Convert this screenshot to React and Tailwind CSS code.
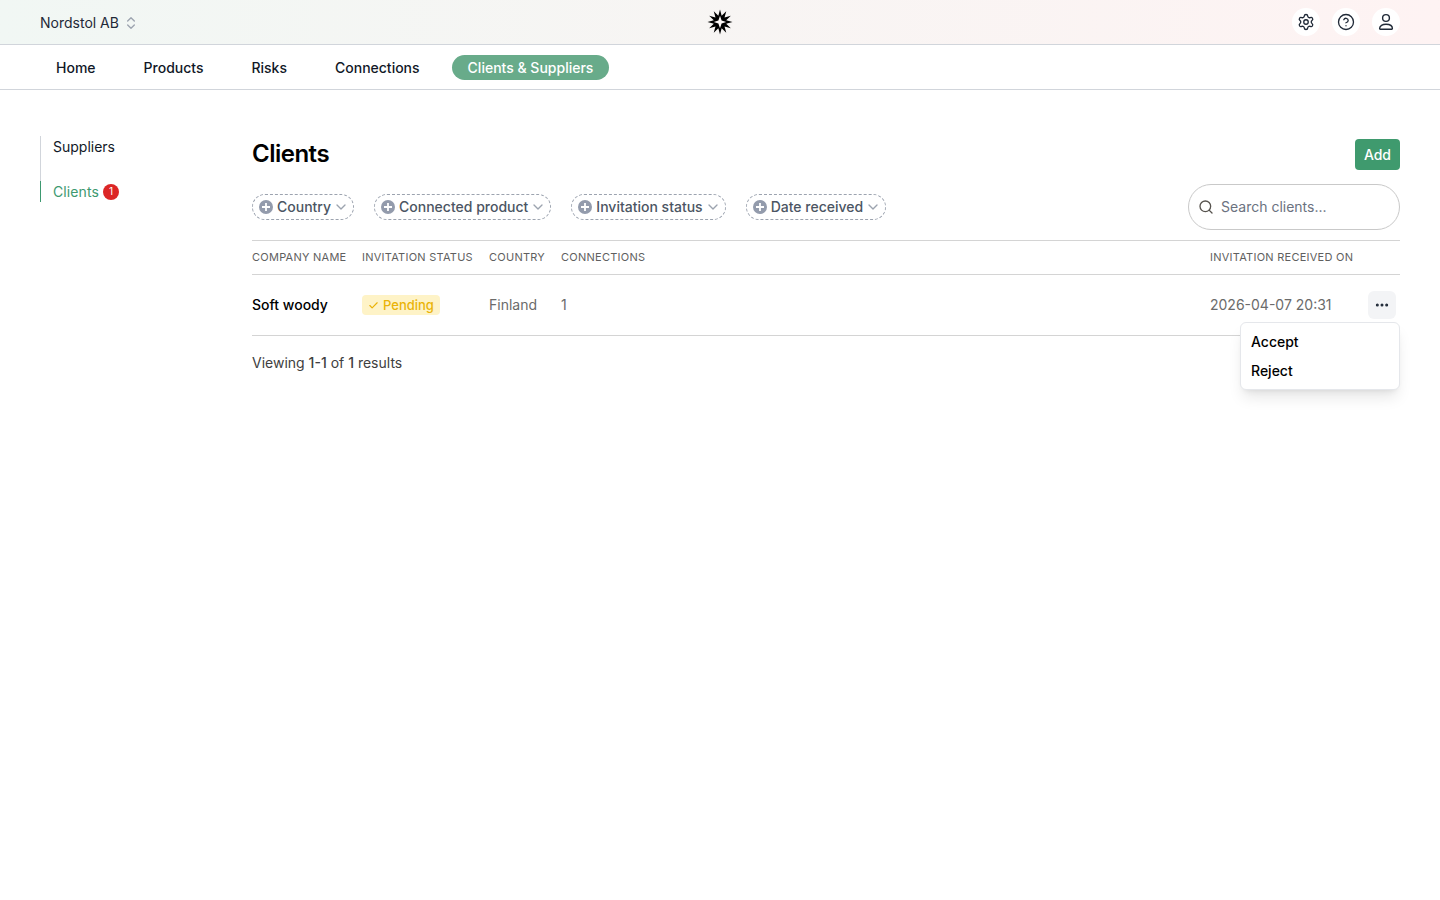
import React from 'react';
import { ChevronDown, ChevronsUpDown, Check, CircleHelp, Ellipsis, Search, Settings } from 'lucide-react';

const tabs = ['Home', 'Products', 'Risks', 'Connections'];
const filters = [
  { label: 'Country', margin: 'mr-5' },
  { label: 'Connected product', margin: 'mr-5' },
  { label: 'Invitation status', margin: 'mr-5' },
  { label: 'Date received', margin: '' },
];

// spiky outer ring for the logo, peaks every 30deg
const logoPoints = Array.from({ length: 24 }, (_, i) => {
  const r = i % 2 === 0 ? 12.5 : 6.4;
  const a = (i * 15 * Math.PI) / 180;
  return `${(13 + r * Math.sin(a)).toFixed(2)},${(13 - r * Math.cos(a)).toFixed(2)}`;
}).join(' ');

const Logo = () => (
  <svg width="26" height="26" viewBox="0 0 26 26">
    <polygon points={logoPoints} fill="#000" />
    <path d="M13 6.800l1.600 4.600 4.600 1.600-4.600 1.600-1.600 4.600-1.600-4.600-4.600-1.600 4.600-1.600z" fill="#fdf8f7" />
  </svg>
);

const UserIcon = () => (
  <svg width="18" height="18" viewBox="0 0 18 18" fill="none" stroke="#1f2937" strokeWidth="1.400">
    <circle cx="9" cy="5" r="3.400" />
    <path d="M3.300 16.200h11.400c.4 0 .7-.3.700-.7 0-2.800-2.900-4.300-6.400-4.300s-6.400 1.500-6.400 4.300c0 .4.300.7.700.7z" />
  </svg>
);

const PlusDot = () => (
  <svg width="14" height="14" viewBox="0 0 14 14" className="shrink-0">
    <circle cx="7" cy="7" r="7" fill="#939bac" />
    <path d="M7 3v8M3 7h8" stroke="#fff" strokeWidth="1.800" />
  </svg>
);

const FilterChip = ({ label, margin }) => (
  <button className={`flex items-center h-[26px] pl-1.5 pr-1 rounded-full border border-dashed border-[#9ca3af] text-sm font-medium text-[#4b5563] ${margin}`}>
    <PlusDot />
    <span className="ml-1 mr-0.5">{label}</span>
    <ChevronDown size={16} strokeWidth={2} className="text-[#9ca3af]" />
  </button>
);

const App = () => {
  return (
    <div className="min-h-[900px] bg-white text-sm text-black antialiased font-['Inter',sans-serif]">
      <header className="relative flex items-center justify-between h-[45px] pl-10 pr-10 border-b border-[#d1d5db] bg-gradient-to-r from-[#f1f7f4] to-[#fef3f3]">
        <button className="flex items-center gap-1 pt-0.5 text-[#1f2937]">
          <span>Nordstol AB</span>
          <ChevronsUpDown size={16} strokeWidth={2} className="text-[#9ca3af]" />
        </button>
        <div className="absolute left-[707px] top-[9px]">
          <Logo />
        </div>
        <div className="flex items-center gap-3">
          <span className="flex items-center justify-center w-7 h-7 rounded-full bg-white">
            <Settings size={18} strokeWidth={1.75} className="text-[#1f2937]" />
          </span>
          <span className="flex items-center justify-center w-7 h-7 rounded-full bg-white">
            <CircleHelp size={18} strokeWidth={1.75} className="text-[#1f2937]" />
          </span>
          <span className="flex items-center justify-center w-7 h-7 rounded-full bg-white">
            <UserIcon />
          </span>
        </div>
      </header>

      <nav className="flex items-center gap-4 h-[45px] px-10 border-b border-[#d1d5db]">
        {tabs.map((tab) => (
          <a key={tab} className="px-4 pt-[3px] pb-px font-medium text-[#111827]">{tab}</a>
        ))}
        <a className="px-4 h-[25px] pt-0.5 flex items-center rounded-full bg-[#68ab8a] font-medium text-white">Clients &amp; Suppliers</a>
      </nav>

      <div className="flex pl-10 pr-10">
        <aside className="w-[212px] shrink-0 pt-[46px]">
          <ul className="flex flex-col gap-6 border-l border-[#d1d5db]">
            <li className="pl-3 h-[21px] flex items-center text-[#111827]">Suppliers</li>
            <li className="-ml-px pl-3 h-[21px] flex items-center gap-1 border-l border-[#3d9970] text-[#3d9970]">
              <span className="tracking-[0.1px]">Clients</span>
              <span className="flex items-center justify-center w-4 h-4 rounded-full bg-[#dc2626] text-white text-[10px]">1</span>
            </li>
          </ul>
        </aside>

        <main className="flex-1 min-w-0 pt-[49px]">
          <div className="flex items-center justify-between h-[31px]">
            <h1 className="-mt-0.5 text-2xl font-semibold tracking-[-0.5px]">Clients</h1>
            <button className="h-[31px] px-[9px] rounded bg-[#3f9a6e] font-medium text-white">Add</button>
          </div>

          <div className="flex items-center justify-between mt-[14px] mb-[10px]">
            <div className="flex items-center">
              {filters.map((f) => (
                <FilterChip key={f.label} label={f.label} margin={f.margin} />
              ))}
            </div>
            <label className="flex items-center gap-[7px] w-[212px] h-[46px] pl-[9px] rounded-full border border-[#c9c9c9] text-[#6b7280]">
              <Search size={16} className="text-[#57534e]" />
              <span>Search clients...</span>
            </label>
          </div>

          <div className="relative">
            <table className="w-full table-fixed border-y border-[#d4d4d4] border-collapse">
              <thead>
                <tr className="h-[34px] border-b border-[#d4d4d4] text-left text-[11px] uppercase tracking-[0.25px] text-[#5f5f5f]">
                  <th className="w-[110px] font-normal">Company name</th>
                  <th className="w-[127px] font-normal">Invitation status</th>
                  <th className="w-[72px] font-normal">Country</th>
                  <th className="font-normal">Connections</th>
                  <th className="w-[190px] font-normal">Invitation received on</th>
                </tr>
              </thead>
              <tbody>
                <tr className="h-[61px]">
                  <td className="font-medium">Soft woody</td>
                  <td>
                    <span className="flex w-fit items-center gap-1 h-5 px-1.5 rounded bg-[#fef3c7] text-[13px] text-[#eab308] font-medium">
                      <Check size={11} strokeWidth={2.5} />
                      Pending
                    </span>
                  </td>
                  <td className="text-[#6b6b6b]">Finland</td>
                  <td className="text-[#6b6b6b]">1</td>
                  <td className="text-[#6b6b6b]">
                    <div className="flex items-center justify-between pr-1">
                      <span>2026-04-07 20:31</span>
                      <button className="flex items-center justify-center w-7 h-7 rounded-md bg-[#f3f4f6] text-[#1f2937]">
                        <Ellipsis size={16} strokeWidth={2.5} />
                      </button>
                    </div>
                  </td>
                </tr>
              </tbody>
            </table>

            <div className="absolute right-0 top-[82px] w-[160px] py-1 rounded-md border border-[#e5e7eb] bg-white font-medium shadow-lg">
              <div className="h-[29px] px-2.5 flex items-center">Accept</div>
              <div className="h-[29px] px-2.5 flex items-center">Reject</div>
            </div>
          </div>

          <p className="mt-[17px] text-[#404040]">
            Viewing <span className="font-medium">1-1</span> of <span className="font-medium">1</span> results
          </p>
        </main>
      </div>
    </div>
  );
};

export default App;
